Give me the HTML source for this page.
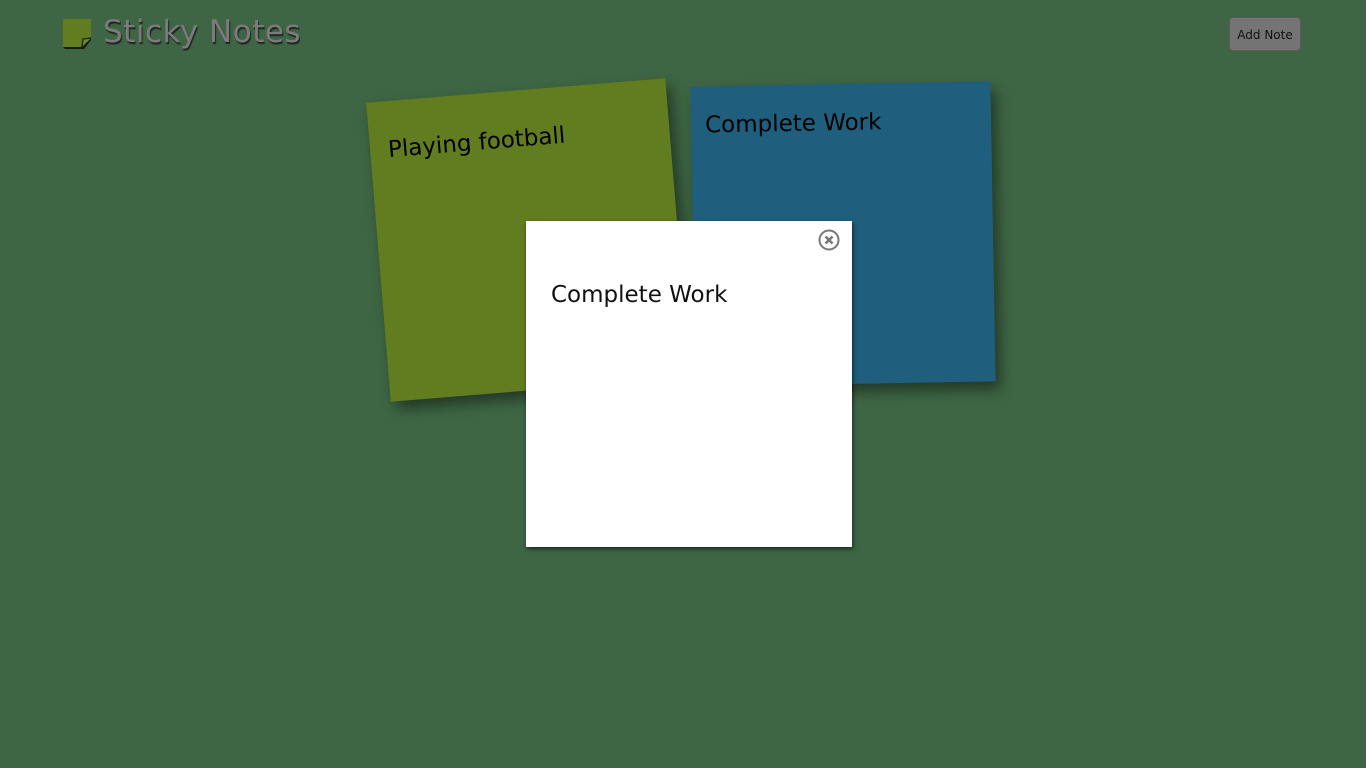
<!DOCTYPE html>
<html><head><meta charset="utf-8"><style>
html,body{margin:0;padding:0;width:1366px;height:768px;overflow:hidden;background:#3e6644;font-family:"Comic Sans MS","DejaVu Sans","Liberation Sans",sans-serif;}
.logo{position:absolute;left:62px;top:18px;}
.title{position:absolute;left:103px;top:14px;font-size:31px;color:#7b7b7b;text-shadow:1px 2px 1px #222;letter-spacing:0.5px;}
.btn{position:absolute;left:1229px;top:17px;width:72px;height:34px;background:#747474;border:1px solid #5c5c5c;border-radius:4px;font-size:12px;color:#111;text-align:center;line-height:34px;box-sizing:border-box;}
.note{position:absolute;width:300px;height:300px;box-shadow:5px 8px 14px rgba(0,0,0,0.45);font-size:23px;color:#000;box-sizing:border-box;padding:36px 18px;}
.g{left:378px;top:90px;background:#627c20;transform:rotate(-4.7deg);}
.b{left:693px;top:84px;background:#1f5f7d;transform:rotate(-1deg);padding:26px 14px;}
.modal{position:absolute;left:526px;top:221px;width:326px;height:326px;background:#fff;box-shadow:1px 2px 4px rgba(0,0,0,0.6);box-sizing:border-box;}
.modal .t{position:absolute;left:25px;top:61px;font-size:23px;color:#111;}
.x{position:absolute;left:818px;top:229px;}
</style></head><body>
<svg class="logo" width="32" height="32" viewBox="0 0 32 32"><path d="M1 1H29V20L20 29H1Z" fill="#627c20"/><path d="M1 29H20L29 20V22L22 31H3Z" fill="#1a1a1a"/><path d="M20 29L21 21L29 20Z" fill="#6f8a2a"/><path d="M20 29L21 21L29 20" fill="none" stroke="#1a1a1a" stroke-width="1.2"/></svg>
<div class="title">Sticky Notes</div>
<div class="btn">Add Note</div>
<div class="note g">Playing football</div>
<div class="note b">Complete Work</div>
<div class="modal"><div class="t">Complete Work</div></div>
<svg class="x" width="22" height="22" viewBox="0 0 22 22"><circle cx="11" cy="11" r="9.5" fill="none" stroke="#777" stroke-width="2"/><path d="M7.5 7.5L14.5 14.5M14.5 7.5L7.5 14.5" stroke="#777" stroke-width="2.6"/></svg>
</body></html>
